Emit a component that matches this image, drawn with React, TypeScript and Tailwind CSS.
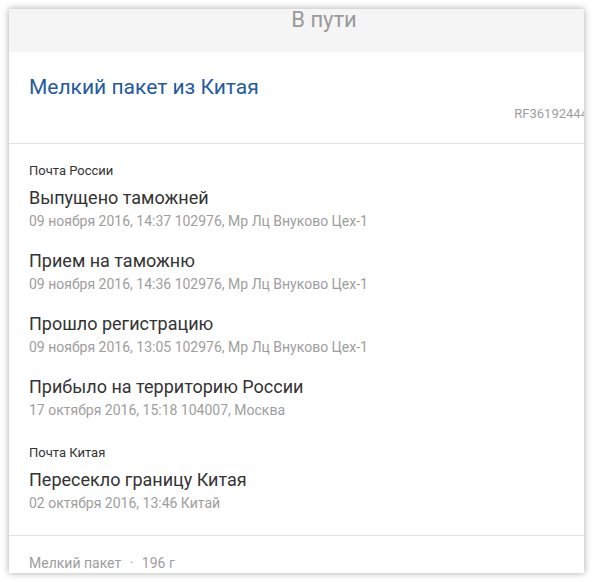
import React from 'react';

interface TrackEvent {
    title: string;
    details: string;
}

interface CarrierGroup {
    carrier: string;
    events: TrackEvent[];
}

const groups: CarrierGroup[] = [
    {
        carrier: 'Почта России',
        events: [
            { title: 'Выпущено таможней', details: '09 ноября 2016, 14:37 102976, Мр Лц Внуково Цех-1' },
            { title: 'Прием на таможню', details: '09 ноября 2016, 14:36 102976, Мр Лц Внуково Цех-1' },
            { title: 'Прошло регистрацию', details: '09 ноября 2016, 13:05 102976, Мр Лц Внуково Цех-1' },
            { title: 'Прибыло на территорию России', details: '17 октября 2016, 15:18 104007, Москва' },
        ],
    },
    {
        carrier: 'Почта Китая',
        events: [{ title: 'Пересекло границу Китая', details: '02 октября 2016, 13:46 Китай' }],
    },
];

const EventRow: React.FC<{ event: TrackEvent; first: boolean }> = ({ event, first }) => (
    <li className={first ? 'mt-[8px]' : 'mt-[20px]'}>
        <div className="text-[18px] leading-[22px] text-[#333]">{event.title}</div>
        <div className="mt-[3px] text-[14px] leading-[18px] text-[#9e9e9e]">{event.details}</div>
    </li>
);

export default function App() {
    return (
        <div className="min-h-screen bg-white pl-[9px] pt-[9px]" style={{ fontFamily: 'Roboto, "Noto Sans", sans-serif' }}>
            <div className="h-[564px] w-[575px] overflow-hidden bg-white shadow-[0_0_7px_rgba(0,0,0,0.35)]">
                <div className="w-[630px]">
                    {/* status bar */}
                    <div className="flow-root h-[43px] bg-[#f5f5f5] text-center">
                        <div className="text-[22px] leading-[22px] text-[#9a9a9a]">В пути</div>
                    </div>

                    {/* parcel name + tracking number */}
                    <div className="border-b border-[#e3e3e3] px-[20px] pb-[21px] pt-[22px]">
                        <div className="text-[21px] leading-[26px] text-[#1f5aa3]">Мелкий пакет из Китая</div>
                        <div className="mt-[6px] pr-[6px] text-right text-[13px] leading-[16px] text-[#9e9e9e]">RF361924445CN</div>
                    </div>

                    {/* history */}
                    <div className="border-b border-[#e3e3e3] px-[20px] pb-[23px] pt-[19px]">
                        {groups.map((group, gi) => (
                            <div key={group.carrier} className={gi > 0 ? 'mt-[26px]' : ''}>
                                <div className="text-[13px] leading-[16px] text-[#333]">{group.carrier}</div>
                                <ul>
                                    {group.events.map((ev, i) => (
                                        <EventRow key={ev.title} event={ev} first={i === 0} />
                                    ))}
                                </ul>
                            </div>
                        ))}
                    </div>

                    <div className="px-[20px] pt-[19px] text-[14px] leading-[17px] text-[#9e9e9e]">
                        Мелкий пакет <span className="mx-[5px]">·</span> 196 г
                    </div>
                </div>
            </div>
        </div>
    );
}
